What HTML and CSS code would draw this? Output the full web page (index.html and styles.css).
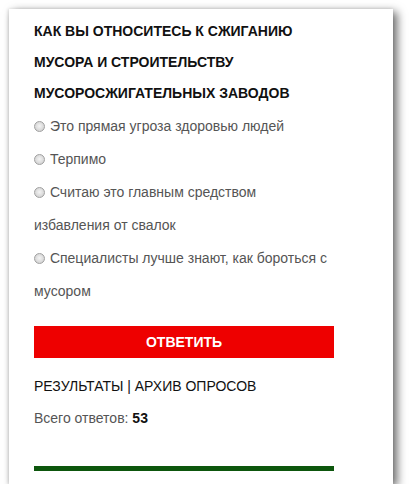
FILE: index.html
```html
<!DOCTYPE html>
<html>
<head>
    <title>Опрос</title>
    <link rel="stylesheet" href="styles.css">
</head>
<body>
    <div class="poll">
        <h3 class="poll-question">Как вы относитесь к сжиганию мусора и строительству мусоросжигательных заводов</h3>
        <form class="poll-answers">
            <label class="answer"><input type="radio" name="answer" value="1"> Это прямая угроза здоровью людей</label>
            <label class="answer"><input type="radio" name="answer" value="2"> Терпимо</label>
            <label class="answer"><input type="radio" name="answer" value="3"> Считаю это главным средством избавления от свалок</label>
            <label class="answer"><input type="radio" name="answer" value="4"> Специалисты лучше знают, как бороться с мусором</label>
            <button type="button" class="poll-submit">Ответить</button>
        </form>
        <div class="poll-links">
            <a href="#">Результаты</a> | <a href="#">Архив опросов</a>
        </div>
        <div class="poll-total">Всего ответов: <b>53</b></div>
        <div class="poll-bottom"></div>
    </div>
</body>
</html>
```

FILE: styles.css
```css
body {
    margin: 0;
    background-color: #ffffff;
    font-family: "Liberation Sans", Arial, sans-serif;
}

.poll {
    margin: 9px 0 0 9px;
    width: 359px;
    height: 468px;
    padding: 7px 0 0 25px;
    background-color: #ffffff;
    box-shadow: 4px 3px 9px rgba(0, 0, 0, 0.6), -1px 0 3px rgba(0, 0, 0, 0.12);
}

.poll-question {
    margin: 0;
    width: 300px;
    font-size: 14px;
    font-weight: bold;
    line-height: 31px;
    text-transform: uppercase;
    color: #111111;
}

.poll-answers {
    margin: 1px 0 0 0;
    width: 300px;
}

.answer {
    display: block;
    font-size: 14px;
    line-height: 33px;
    color: #555555;
}

.answer input {
    -webkit-appearance: none;
    appearance: none;
    width: 11px;
    height: 11px;
    margin: 0 1px 0 0;
    border: 1px solid #a0a0a0;
    border-radius: 50%;
    background: radial-gradient(circle at 50% 45%, #f4f4f4 0, #dcdcdc 55%, #c8c8c8 100%);
    vertical-align: -1px;
}

.poll-submit {
    display: block;
    margin-top: 18px;
    width: 300px;
    height: 32px;
    border: 0;
    background-color: #ee0000;
    color: #ffffff;
    font-family: "Liberation Sans", Arial, sans-serif;
    font-size: 14px;
    font-weight: bold;
    text-transform: uppercase;
    cursor: pointer;
}

.poll-links {
    margin-top: 12px;
    font-size: 14px;
    line-height: 32px;
    color: #111111;
}

.poll-links a {
    color: #111111;
    text-decoration: none;
    text-transform: uppercase;
}

.poll-total {
    font-size: 14px;
    line-height: 32px;
    color: #555555;
}

.poll-total b {
    color: #111111;
}

.poll-bottom {
    margin-top: 32px;
    width: 300px;
    height: 5px;
    background-color: #0d560d;
}
```
